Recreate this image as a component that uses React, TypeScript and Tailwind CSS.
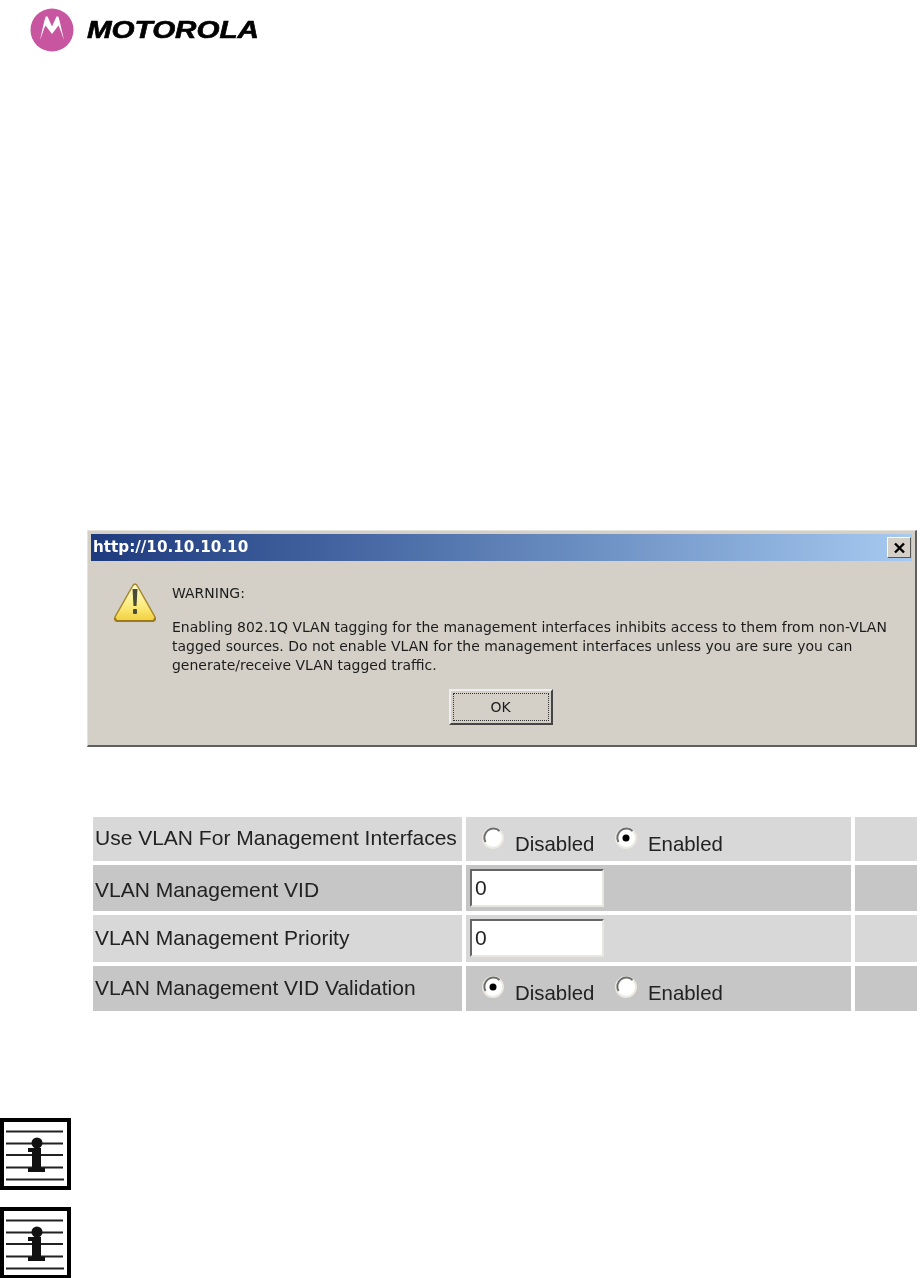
import React from 'react';

function Logo() {
    return (
        <div className="flex items-center h-[44px]">
            <svg width="44" height="44" viewBox="0 0 44 44" className="shrink-0">
                <circle cx="22" cy="22" r="21.500" fill="#c8559f" />
                <path
                    d="M10 32 C12 24 13.500 15 15.700 8.500 L17.500 8.500 L22 18.500 L26.500 8.500 L28.300 8.500 C30.500 15 32 24 34 32 C32 27 30.500 21.500 28.500 17.500 L22 26 L15.500 17.500 C13.500 21.500 12 27 10 32 Z"
                    fill="#fff"
                />
            </svg>
            <span className="ml-[13px] origin-left scale-x-[1.285] font-['Liberation_Sans',sans-serif] font-bold italic text-[23px] leading-none text-black [-webkit-text-stroke:0.6px_black]">
                MOTOROLA
            </span>
        </div>
    );
}

function WarningIcon() {
    return (
        <svg width="46" height="42" viewBox="0 0 46 42" className="shrink-0">
            <defs>
                <linearGradient id="warn" x1="0" y1="0" x2="0" y2="1">
                    <stop offset="0" stopColor="#fffbd0" />
                    <stop offset="0.6" stopColor="#fbeb7c" />
                    <stop offset="1" stopColor="#f3cf3c" />
                </linearGradient>
            </defs>
            <path d="M23 2 C24 2 25 3 26 5 L43 35 C44 38 43 39 40 39 L6 39 C3 39 2 38 3 35 L20 5 C21 3 22 2 23 2 Z" fill="url(#warn)" stroke="#a5862a" strokeWidth="1.500" />
            <path d="M3 36 C3.500 38.500 4 39 6 39 L40 39 C42 39 42.500 38.500 43 36" fill="none" stroke="#9a7a1c" strokeWidth="2.200" />
            <path d="M20.500 7 L25.500 7 L24.500 24 L21.500 24 Z" fill="#4a4a3a" />
            <rect x="21" y="27" width="4" height="5" rx="1" fill="#4a4a3a" />
        </svg>
    );
}

function AlertDialog() {
    return (
        <div className="ml-[87px] mt-[478px] w-[830px] h-[217px] flex flex-col bg-[#d4d0c8] border-t-[1px] border-l-[1px] border-r-[2px] border-b-[2px] border-t-[#e6e3dc] border-l-[#e6e3dc] border-r-[#5f5f5f] border-b-[#5f5f5f] pt-[3px] pl-[3px] pr-[3px] font-['DejaVu_Sans',sans-serif] text-[#1c1c1c]">
            <div className="h-[27px] shrink-0 flex items-center justify-between pl-[2px] pr-[1px] bg-gradient-to-r from-[#1e3a7e] to-[#a6caf0]">
                <span className="text-white font-bold text-[15.2px] leading-none">http://10.10.10.10</span>
                <div className="w-[24px] h-[21px] flex items-center justify-center bg-[#d4d0c8] border border-t-white border-l-white border-r-[#555] border-b-[#555]">
                    <svg width="13" height="12" viewBox="0 0 13 12">
                        <path d="M2 1.500 L11 10.500 M11 1.500 L2 10.500" stroke="#000" strokeWidth="2.400" />
                    </svg>
                </div>
            </div>
            <div className="flex pl-[21px] pr-[8px] pt-[21px]">
                <WarningIcon />
                <div className="ml-[14px] pt-[2px] text-[13.98px] leading-[19px] whitespace-nowrap">
                    <p>WARNING:</p>
                    <p className="mt-[15px]">Enabling 802.1Q VLAN tagging for the management interfaces inhibits access to them from non-VLAN</p>
                    <p>tagged sources. Do not enable VLAN for the management interfaces unless you are sure you can</p>
                    <p>generate/receive VLAN tagged traffic.</p>
                </div>
            </div>
            <div className="flex justify-center pr-[2px] mt-[14px]">
                <button className="w-[104px] h-[36px] p-[2px] bg-[#d4d0c8] border-2 border-t-[#eeeeee] border-l-[#eeeeee] border-r-[#444] border-b-[#444]">
                    <span className="flex items-center justify-center h-full border border-dotted border-[#333] text-[13.98px]">OK</span>
                </button>
            </div>
        </div>
    );
}

function Radio({ checked }: { checked?: boolean }) {
    return (
        <svg width="24" height="24" viewBox="0 0 24 24" className="shrink-0">
            <circle cx="12" cy="12" r="10" fill="#fff" stroke="#ece9e2" strokeWidth="2" />
            <path d="M4.500 16 A9 9 0 0 1 18.500 5" fill="none" stroke="#6e6e6e" strokeWidth="2" />
            {checked && <circle cx="12" cy="12" r="3.500" fill="#000" />}
        </svg>
    );
}

function RadioPair({ value, top }: { value: 'Disabled' | 'Enabled'; top: string }) {
    return (
        <div className={`flex items-start pl-[15px] text-[20.4px] ${top}`}>
            <Radio checked={value === 'Disabled'} />
            <span className="ml-[10px] mt-[7px] w-[99px]">Disabled</span>
            <Radio checked={value === 'Enabled'} />
            <span className="ml-[10px] mt-[7px]">Enabled</span>
        </div>
    );
}

function ValueBox() {
    return (
        <div className="ml-[4px] mt-[4px] w-[134px] h-[38px] flex items-center pl-[3px] bg-white border-[2.5px] border-t-[#666] border-l-[#666] border-r-[#e8e6e0] border-b-[#e8e6e0]">
            0
        </div>
    );
}

const rows = [
    { label: 'Use VLAN For Management Interfaces', kind: 'radio', value: 'Enabled', h: 'h-[44px]', bg: 'bg-[#d8d8d8]', pt: 'pt-[10px]', top: 'pt-[9px]' },
    { label: 'VLAN Management VID', kind: 'box', h: 'h-[46px]', bg: 'bg-[#c6c6c6]', pt: 'pt-[14px]' },
    { label: 'VLAN Management Priority', kind: 'box', h: 'h-[47px]', bg: 'bg-[#d8d8d8]', pt: 'pt-[12px]' },
    { label: 'VLAN Management VID Validation', kind: 'radio', value: 'Disabled', h: 'h-[45px]', bg: 'bg-[#c6c6c6]', pt: 'pt-[11px]', top: 'pt-[9px]' },
] as const;

function SettingsTable() {
    return (
        <div className="ml-[93px] mt-[70px] w-[824px] flex flex-col gap-[4px] font-['Liberation_Sans',sans-serif] text-[21px] leading-[22px] text-[#222]">
            {rows.map((row) => (
                <div key={row.label} className={`flex gap-[4px] ${row.h}`}>
                    <div className={`w-[369px] pl-[2px] whitespace-nowrap ${row.pt} ${row.bg}`}>{row.label}</div>
                    <div className={`w-[385px] ${row.bg}`}>
                        {row.kind === 'radio' ? <RadioPair value={row.value} top={row.top} /> : <ValueBox />}
                    </div>
                    <div className={`flex-1 ${row.bg}`} />
                </div>
            ))}
        </div>
    );
}

function NoteIcon() {
    return (
        <svg width="71" height="72" viewBox="0 0 71 72" className="block">
            <rect x="2" y="2" width="67" height="68" fill="#fff" stroke="#000" strokeWidth="4" />
            <path d="M6 13.500 H63 M6 25.500 H63 M6 37 H63 M6 49.500 H63 M6 61.500 H64" stroke="#222" strokeWidth="2" />
            <circle cx="37" cy="25" r="5.500" fill="#111" />
            <path d="M28 30 H41 V50 H45 V54 H28 V50 H32 V34 H28 Z" fill="#111" />
        </svg>
    );
}

export default function App() {
    return (
        <div className="w-[920px] h-[1278px] overflow-hidden bg-white blur-[0.4px]">
            <div className="pl-[30px] pt-[8px]">
                <Logo />
            </div>
            <AlertDialog />
            <SettingsTable />
            <div className="mt-[107px] flex flex-col gap-[17px]">
                <NoteIcon />
                <NoteIcon />
            </div>
        </div>
    );
}
